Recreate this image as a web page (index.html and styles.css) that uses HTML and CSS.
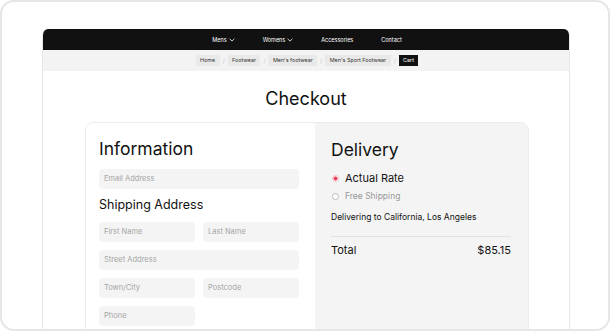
FILE: index.html
```html
<!DOCTYPE html>
<html lang="en">

<head>
    <meta charset="UTF-8">
    <meta name="viewport" content="width=device-width, initial-scale=1.0">
    <title>Checkout</title>
    <link rel="stylesheet" href="styles.css">
</head>

<body>
    <div class="frame">
        <div class="page">
            <div class="nav">
                <span>Mens <svg width="6" height="4" viewBox="0 0 6 4"><path d="M0.6 0.8L3 3.1L5.4 0.8" fill="none" stroke="#fff" stroke-width="0.8"/></svg></span>
                <span>Womens <svg width="6" height="4" viewBox="0 0 6 4"><path d="M0.6 0.8L3 3.1L5.4 0.8" fill="none" stroke="#fff" stroke-width="0.8"/></svg></span>
                <span>Accessories</span>
                <span>Contact</span>
            </div>
            <div class="crumbs">
                <span class="crumb">Home</span><span class="sep">/</span>
                <span class="crumb">Footwear</span><span class="sep">/</span>
                <span class="crumb">Men's footwear</span><span class="sep">/</span>
                <span class="crumb">Men's Sport Footwear</span><span class="sep">/</span>
                <span class="crumb current">Cart</span>
            </div>

            <h1 class="title">Checkout</h1>

            <div class="card">
                <div class="info">
                    <h2>Information</h2>
                    <div class="field">Email Address</div>
                    <h3>Shipping Address</h3>
                    <div class="row">
                        <div class="field">First Name</div>
                        <div class="field">Last Name</div>
                    </div>
                    <div class="field">Street Address</div>
                    <div class="row">
                        <div class="field">Town/City</div>
                        <div class="field">Postcode</div>
                    </div>
                    <div class="row">
                        <div class="field">Phone</div>
                    </div>
                </div>
                <div class="delivery">
                    <h2>Delivery</h2>
                    <div class="option active"><span class="radio"></span>Actual Rate</div>
                    <div class="option"><span class="radio"></span>Free Shipping</div>
                    <p class="where">Delivering to California, Los Angeles</p>
                    <div class="total">
                        <span>Total</span>
                        <span>$85.15</span>
                    </div>
                </div>
            </div>
        </div>
    </div>
</body>

</html>
```

FILE: styles.css
```css
* {
    box-sizing: border-box;
}

body {
    margin: 0;
    background: #fff;
    font-family: Inter, "Liberation Sans", sans-serif;
    color: #111;
}

.frame {
    width: 610px;
    height: 331px;
    border: 2px solid #e6e6e6;
    border-radius: 14px;
    overflow: hidden;
    padding: 27px 0 0 40px;
}

.page {
    width: 528px;
    height: 400px;
    border: 1px solid #e8e8e8;
    border-top: none;
    border-radius: 6px 6px 0 0;
    overflow: hidden;
}

.nav {
    height: 21px;
    background: #111;
    display: flex;
    justify-content: center;
    align-items: center;
    gap: 28px;
    color: #fff;
    font-size: 5.5px;
    padding-left: 2px;
}

.nav span {
    display: flex;
    align-items: center;
    gap: 2px;
}

.crumbs {
    height: 21px;
    background: #f3f3f3;
    display: flex;
    justify-content: center;
    align-items: center;
    font-size: 5.4px;
    color: #333;
    padding-left: 2px;
}

.crumb {
    background: #e9e9e9;
    height: 11px;
    line-height: 11px;
    padding: 0 4.5px;
}

.crumb.current {
    background: #111;
    color: #fff;
}

.sep {
    color: #bbb;
    margin: 0 3px;
}

.title {
    margin: 18px 0 0;
    text-align: center;
    font-size: 18px;
    font-weight: 400;
    line-height: 20px;
}

.card {
    margin: 13px 0 0 42px;
    width: 444px;
    height: 260px;
    display: grid;
    grid-template-columns: 229px 215px;
    border: 1px solid #ececec;
    border-radius: 8px;
    overflow: hidden;
}

.info {
    padding: 15px 16px 0 13px;
}

.info h2,
.delivery h2 {
    margin: 0;
    font-size: 17.5px;
    font-weight: 400;
    line-height: 22px;
}

.field {
    height: 20px;
    background: #f4f4f4;
    border-radius: 4px;
    font-size: 7.5px;
    color: #a5a5a5;
    line-height: 20px;
    padding-left: 5px;
    margin-bottom: 8px;
}

.info h2 + .field {
    margin-top: 9px;
}

.info h3 {
    margin: 0 0 9px;
    font-size: 12.5px;
    font-weight: 400;
    line-height: 16px;
}

.row {
    display: grid;
    grid-template-columns: 1fr 1fr;
    gap: 8px;
}

.delivery {
    background: #f4f4f4;
    padding: 16px 19px 0 16px;
}

.delivery h2 {
    margin-bottom: 8px;
}

.option {
    display: flex;
    align-items: center;
    font-size: 8.5px;
    color: #999;
    height: 18px;
}

.option.active {
    font-size: 11px;
    color: #111;
}

.radio {
    width: 7px;
    height: 7px;
    border: 1px solid #bbb;
    border-radius: 50%;
    margin: 0 6px 0 1px;
    background: #fff;
}

.option.active .radio {
    border-color: #f6c3ca;
    background: radial-gradient(circle, #e8405a 0, #e8405a 1.8px, #fde9ec 2.2px);
}

.where {
    margin: 6px 0 0;
    font-size: 8.5px;
    line-height: 12px;
}

.total {
    margin-top: 13px;
    border-top: 1px solid #e2e2e2;
    padding-top: 6px;
    display: flex;
    justify-content: space-between;
    font-size: 11px;
    line-height: 14px;
}
```
